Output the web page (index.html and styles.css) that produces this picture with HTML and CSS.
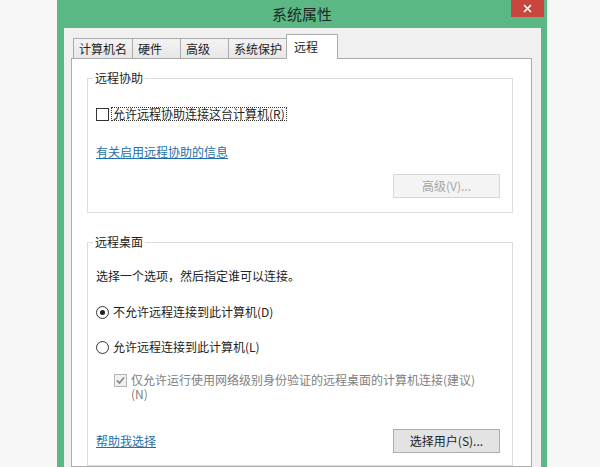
FILE: index.html
```html
<!doctype html>
<html lang="zh-CN">
<head>
<meta charset="utf-8">
<title>系统属性</title>
<link rel="stylesheet" href="styles.css">
</head>
<body>

	<div class="window">

		<div class="titlebar">
			<span class="title">系统属性</span>
			<span class="close">
				<svg width="9" height="9" viewBox="0 0 9 9"><path d="M1 1 L8 8 M8 1 L1 8" stroke="#fff" stroke-width="1.6" fill="none"/></svg>
			</span>
		</div>

		<div class="client">

			<div class="tabs">
				<span class="tab">计算机名</span>
				<span class="tab">硬件</span>
				<span class="tab">高级</span>
				<span class="tab tab-last">系统保护</span>
				<span class="tab active">远程</span>
			</div>

			<div class="panel">

				<fieldset class="group">
					<legend>远程协助</legend>
					<div class="check-row">
						<span class="box"></span>
						<span class="focus">允许远程协助连接这台计算机(R)</span>
					</div>
					<a class="link link-info" href="#">有关启用远程协助的信息</a>
					<div class="actions">
						<button class="btn" disabled>高级(V)...</button>
					</div>
				</fieldset>

				<fieldset class="group group-desktop">
					<legend>远程桌面</legend>
					<div class="intro">选择一个选项，然后指定谁可以连接。</div>
					<div class="radio-row">
						<span class="radio on"></span>
						<span>不允许远程连接到此计算机(D)</span>
					</div>
					<div class="radio-row radio-second">
						<span class="radio"></span>
						<span>允许远程连接到此计算机(L)</span>
					</div>
					<div class="sub-check">
						<span class="box box-disabled">
							<svg width="11" height="11" viewBox="0 0 11 11"><path d="M2 5.5 L4.5 8 L9 2.5" stroke="#8a8a8a" stroke-width="1.8" fill="none"/></svg>
						</span>
						<span class="sub-text">仅允许运行使用网络级别身份验证的远程桌面的计算机连接(建议)(N)</span>
					</div>
					<div class="footer-row">
						<a class="link" href="#">帮助我选择</a>
						<button class="btn">选择用户(S)...</button>
					</div>
				</fieldset>

			</div>

		</div>

	</div>

</body>
</html>
```

FILE: styles.css
```css
body { background: #f7f7f7; color: #222; font: 12px/16px "Noto Sans CJK SC", "Microsoft YaHei", sans-serif; margin: 0; overflow: hidden; }

.window { background: #5bb885; display: flex; flex-direction: column; height: 467px; margin-left: 57px; width: 490px; }

.titlebar { display: grid; grid-template-columns: 1fr auto 1fr; height: 28px; }
.title { color: #1c2b22; font-size: 15px; grid-column: 2; line-height: 28px; }
.close { align-items: center; background: #c9463e; display: flex; grid-column: 3; height: 17px; justify-content: center; justify-self: end; margin-right: 3px; width: 33px; }

.client { background: #f0f0f0; display: flex; flex: 1; flex-direction: column; margin: 0 6px 0 7px; padding: 6px 9px 0 7px; }

.tabs { align-items: flex-end; display: flex; height: 25px; margin-bottom: -1px; padding-left: 2px; }
.tab { background: linear-gradient(#f3f3f3, #e7e7e7); border: 1px solid #acacac; border-bottom: 0; border-right: 0; box-sizing: border-box; height: 20px; line-height: 19px; margin-bottom: 1px; min-width: 48px; padding: 0 5px; }
.tab-last { border-right: 1px solid #acacac; }
.tab.active { background: #fff; border-right: 1px solid #acacac; height: 25px; margin: 0 0 0 -2px; min-width: 52px; padding: 2px 7px 0; position: relative; }

.panel { background: #fff; border: 1px solid #acacac; flex: 1; padding: 11px 18px 0 15px; }

.group { border: 1px solid #dcdcdc; margin: 0; min-width: 0; padding: 20px 12px 14px 8px; }
.group legend { margin-left: -3px; padding: 0 2px; }
.group-desktop { margin-top: 21px; padding: 18px 12px 12px 8px; }

.check-row { align-items: center; display: flex; gap: 2px; height: 16px; }
.box { align-items: center; background: #fff; border: 1px solid #333; box-sizing: border-box; display: flex; flex: none; height: 13px; justify-content: center; width: 13px; }
.box-disabled { background: #f0f0f0; border-color: #b5b5b5; margin-top: 1px; }
.focus { border: 1px dotted #333; line-height: 12px; padding: 0 1px; }

.link { color: #1f6fa8; display: block; text-decoration: underline; width: max-content; }
.link-info { margin-top: 22px; }

.actions { display: flex; justify-content: flex-end; margin-top: 14px; }
.btn { background: #e3e3e3; border: 1px solid #adadad; color: #222; font: inherit; height: 24px; padding: 0; width: 107px; }
.btn:disabled { background: #f4f4f4; border-color: #d8d8d8; color: #a5a5a5; }

.radio-row { align-items: center; display: flex; gap: 4px; margin-top: 20px; }
.radio-second { margin-top: 19px; }
.radio { align-items: center; background: #fff; border: 1px solid #333; border-radius: 50%; box-sizing: border-box; display: flex; height: 13px; justify-content: center; width: 13px; }
.radio.on::after { background: #222; border-radius: 50%; content: ""; height: 5px; width: 5px; }

.sub-check { align-items: flex-start; display: flex; gap: 4px; margin: 18px 0 0 18px; }
.sub-text { color: #808080; line-height: 14px; width: 350px; }

.footer-row { align-items: center; display: flex; justify-content: space-between; margin-top: 28px; }
```
